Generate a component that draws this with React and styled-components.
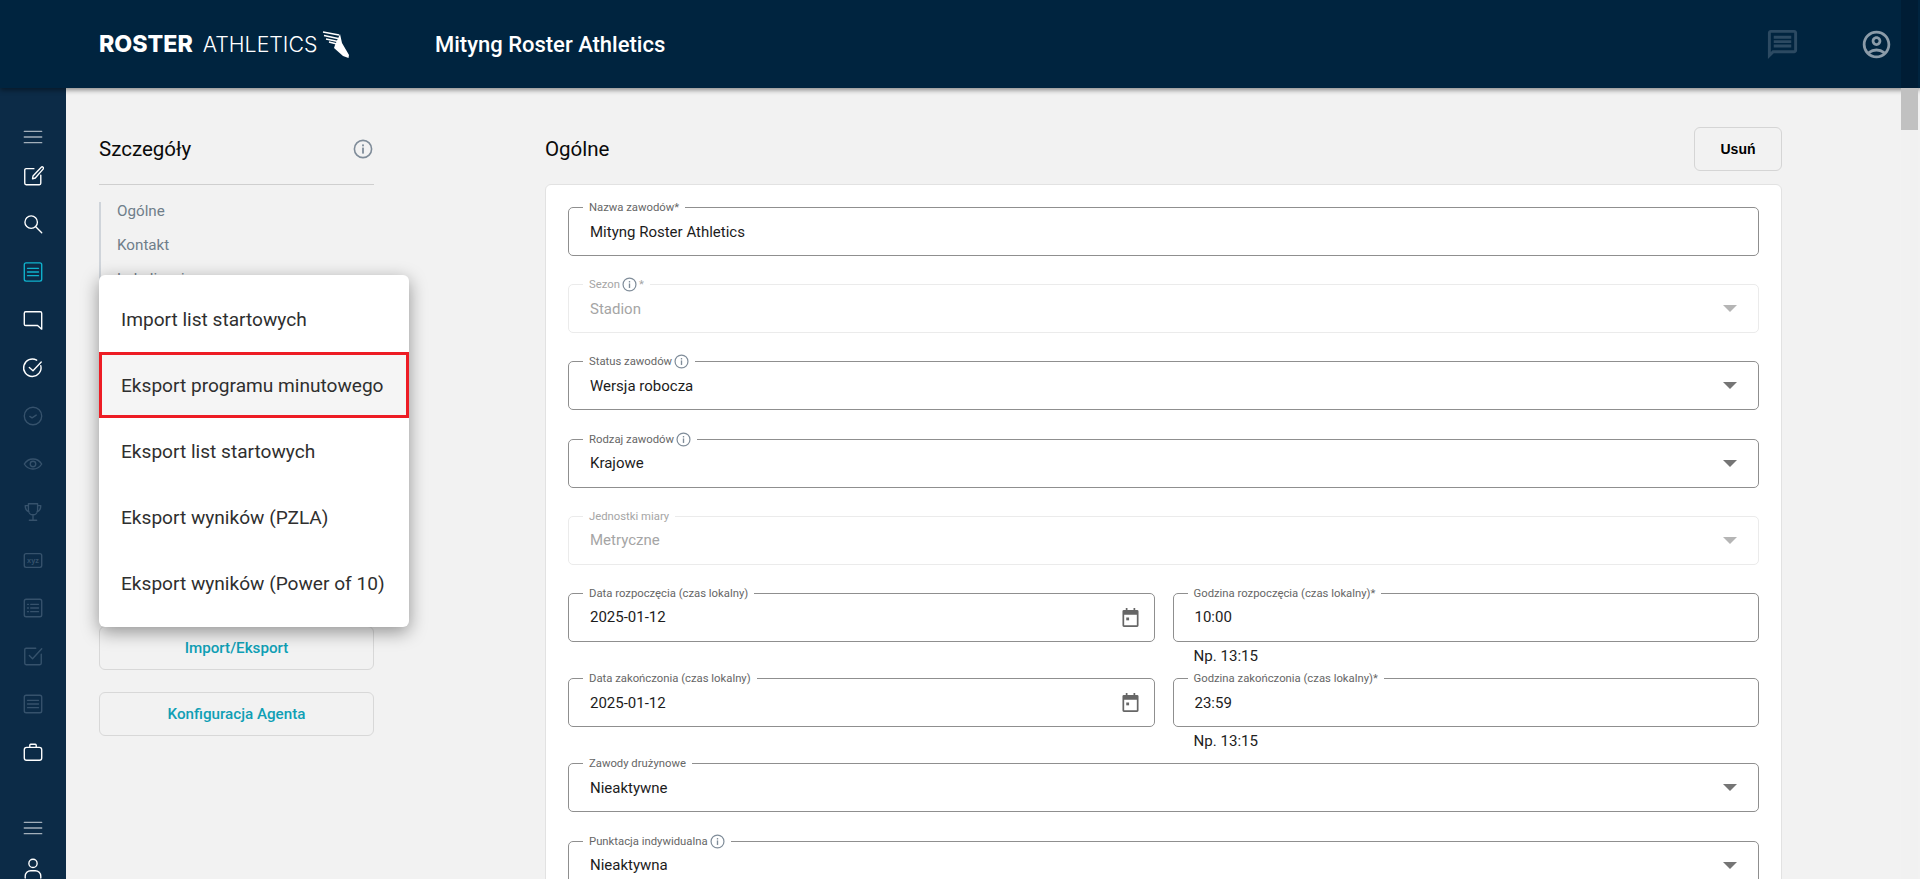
import React from 'react'
import styled, {createGlobalStyle} from 'styled-components'
import {MdOutlineMessage, MdOutlineAccountCircle} from 'react-icons/md'

const GlobalStyle = createGlobalStyle`
  html, body {
    margin: 0;
    height: 100%;
    overflow: hidden;
    background: #f2f2f2;
    font-family: Roboto, "Liberation Sans", sans-serif;
  }
`

const Page = styled.div`
  position: relative;
  height: 100vh;
  display: grid;
  grid-template-rows: 88px 1fr;
  overflow: hidden;
`

const Header = styled.header`
  position: relative;
  z-index: 2;
  display: flex;
  align-items: center;
  padding: 0 27px 0 99px;
  background: #00243f;
  box-shadow: 0 2px 5px rgba(0, 0, 0, 0.45);
`

const Logo = styled.div`
  display: flex;
  align-items: center;
  width: 336px;
  color: #fff;
  font-family: Inter, sans-serif;
  line-height: 27px;
`

const LogoBold = styled.span`
  font-size: 23.2px;
  font-weight: 800;
  margin-right: 10px;
`

const LogoLight = styled.span`
  font-size: 21.3px;
  font-weight: 300;
  margin-right: 5px;
`

const EventName = styled.h1`
  flex: 1;
  margin: 0;
  color: #fff;
  font-size: 22px;
  font-weight: 500;
`

const HeaderIcons = styled.div`
  display: flex;
  align-items: center;
  gap: 60px;
`

const ChatIcon = styled(MdOutlineMessage)`
  color: #2c4a62;
  font-size: 35px;
`

const UserIcon = styled(MdOutlineAccountCircle)`
  color: #8b9ba8;
  font-size: 33px;
`

const Body = styled.div`
  display: flex;
  min-height: 0;
`

const Sidebar = styled.nav`
  flex: 0 0 66px;
  display: flex;
  flex-direction: column;
  align-items: center;
  padding-top: 34px;
  background: #0c2b47;
`

const SideSlot = styled.div`
  flex: 0 0 ${p => p.$height || 48}px;
  display: flex;
  align-items: center;
  justify-content: center;
  color: ${p => (p.$tone === 'active' ? '#0fb2cd' : p.$tone === 'dim' ? '#36526c' : p.$tone === 'soft' ? '#a3afba' : '#fff')};
`

const SideSpacer = styled.div`
  flex: 0 0 32px;
`

const Content = styled.main`
  flex: 1;
  display: flex;
  gap: 171px;
  padding: 39px 0 0 33px;
  min-width: 0;
`

const LeftColumn = styled.aside`
  position: relative;
  flex: 0 0 275px;
`

const TitleRow = styled.div`
  display: flex;
  align-items: center;
  justify-content: space-between;
  height: 44px;
  margin-bottom: 13px;
`

const LeftTitleRow = styled(TitleRow)`
  box-sizing: border-box;
  height: 58px;
  padding: 0 1px 13px 0;
  margin-bottom: 17px;
  border-bottom: 1px solid #cfcfcf;
`

const Title = styled.h2`
  margin: 0;
  font-size: 20.5px;
  font-weight: 400;
  color: #0a0a0a;
`

const InfoBig = styled.svg`
  width: 20px;
  height: 20px;
  color: #7f8c99;
`

const SectionNav = styled.ul`
  margin: 0;
  padding: 0 0 0 16px;
  height: 408px;
  list-style: none;
  border-left: 2px solid #cfd4da;
`

const SectionLink = styled.li`
  height: 18px;
  margin-bottom: 16px;
  font-size: 15.2px;
  line-height: 18px;
  color: #6f7e8a;
`

const OutlineButton = styled.button`
  display: block;
  width: 275px;
  height: 44px;
  margin-top: ${p => p.$top || 0}px;
  border: 1px solid #d8d8d8;
  border-radius: 6px;
  background: transparent;
  color: #0f9fb5;
  font-family: Roboto, sans-serif;
  font-size: 15.2px;
  font-weight: 500;
`

const Menu = styled.ul`
  position: absolute;
  top: 148px;
  left: 0;
  z-index: 3;
  width: 310px;
  height: 352px;
  margin: 0;
  padding: 11px 0;
  box-sizing: border-box;
  list-style: none;
  background: #fff;
  border-radius: 6px;
  box-shadow: 0 5px 18px rgba(0, 0, 0, 0.4);
`

const MenuItem = styled.li`
  display: flex;
  align-items: center;
  box-sizing: border-box;
  height: 66px;
  padding-left: ${p => (p.$selected ? 19 : 22)}px;
  font-size: 19.1px;
  color: #2f2f2f;
  white-space: nowrap;
  ${p => p.$selected && 'background: #f5f5f5; border: 3px solid #ed1c24;'}
`

const RightColumn = styled.section`
  flex: 0 0 1237px;
`

const DeleteButton = styled.button`
  width: 88px;
  height: 44px;
  border: 1px solid #d5d5d5;
  border-radius: 6px;
  background: transparent;
  color: #000;
  font-family: "Liberation Sans", sans-serif;
  font-size: 14px;
  font-weight: 700;
`

const Card = styled.div`
  display: flex;
  flex-direction: column;
  gap: 28.2px;
  height: 800px;
  padding: 22px 22px 0;
  background: #fff;
  border: 1px solid #e2e2e2;
  border-radius: 6px;
`

const FieldBox = styled.div`
  position: relative;
  flex: 0 0 49px;
  display: flex;
  align-items: center;
  justify-content: space-between;
  box-sizing: border-box;
  height: 49px;
  padding: 0 15px 0 21px;
  border: 1px solid ${p => (p.$disabled ? '#ebebeb' : '#8f8f8f')};
  border-radius: 5px;
  color: ${p => (p.$disabled ? '#a5a5a5' : '#1c1c1c')};
  font-size: 15px;
`

const FieldLabel = styled.label`
  position: absolute;
  top: -7px;
  left: 14px;
  display: flex;
  align-items: center;
  gap: 2px;
  height: 13px;
  padding: 0 6px;
  background: #fff;
  font-size: 11.3px;
  color: ${p => (p.$disabled ? '#a5a5a5' : '#666')};
  white-space: nowrap;
`

const InfoSmall = styled.svg`
  width: 15px;
  height: 15px;
  color: #7f8c99;
`

const Arrow = styled.span`
  width: 0;
  height: 0;
  margin-right: 6px;
  border-left: 7px solid transparent;
  border-right: 7px solid transparent;
  border-top: 7px solid ${p => (p.$disabled ? '#b5b5b5' : '#757575')};
`

const CalendarIcon = styled.svg`
  width: 17px;
  height: 19px;
  color: #666;
`

const TimeRow = styled.div`
  flex: 0 0 85.2px;
  display: grid;
  grid-template-columns: 1fr 1fr;
  column-gap: 18px;
  margin-bottom: -28.2px;
`

const Helper = styled.div`
  padding: 4px 0 0 21px;
  font-size: 15.1px;
  line-height: 20px;
  color: #222;
`

const ScrollTrack = styled.div`
  position: absolute;
  top: 0;
  right: 2px;
  z-index: 4;
  width: 17px;
  height: 100%;
  background: linear-gradient(#001d35 0, #001d35 88px, #f1f1f1 88px);
`

const ScrollThumb = styled.div`
  margin-top: 88px;
  height: 42px;
  background: #c1c1c1;
`

const Stroke = ({children, size = 22, width = 1.5}) => (
  <svg width={size} height={size} viewBox="0 0 24 24" fill="none" stroke="currentColor" strokeWidth={width} strokeLinecap="round" strokeLinejoin="round">
    {children}
  </svg>
)

const InfoGlyph = () => (
  <>
    <circle cx="10" cy="10" r="8.6" fill="none" stroke="currentColor" strokeWidth="1.6" />
    <rect x="9.1" y="8.6" width="1.8" height="6" fill="currentColor" />
    <rect x="9.1" y="5.4" width="1.8" height="1.9" fill="currentColor" />
  </>
)

const Lines = () => (
  <Stroke><path d="M2.5 5.8h19M2.5 12h19M2.5 18.2h19" /></Stroke>
)

const sideTop = [
  {tone: 'soft', height: 30, icon: <Lines />},
  {tone: 'white', icon: <Stroke><path d="M13 4H4.5A1.5 1.5 0 0 0 3 5.500V20a1.500 1.500 0 0 0 1.500 1.500H19A1.500 1.500 0 0 0 20.500 20V11" /><path d="M21 2.500l-9 9.500-.5 3 3-.8 8.500-9.700a1.400 1.400 0 0 0-2-2z" /></Stroke>},
  {tone: 'white', icon: <Stroke><circle cx="10" cy="10" r="6.800" /><path d="M15 15l6.500 6.500" /></Stroke>},
  {tone: 'active', icon: <Stroke><rect x="2.500" y="2" width="19" height="20" rx="2" /><path d="M6 8h12M6 12h12M6 16h12" /></Stroke>},
  {tone: 'white', icon: <Stroke><path d="M4 3h16a1.500 1.500 0 0 1 1.500 1.500V22l-4.500-4H4a1.500 1.500 0 0 1-1.500-1.500v-12A1.500 1.500 0 0 1 4 3z" /></Stroke>},
  {tone: 'white', icon: <Stroke><path d="M20.500 9.500A9.500 9.500 0 1 1 16 3.500" /><path d="M8 11.500l4 3.500 9-9.500" /></Stroke>},
  {tone: 'dim', icon: <Stroke><circle cx="12" cy="12" r="9.500" /><path d="M8.500 12.500l2.500 1.500 4.500-3" /></Stroke>},
  {tone: 'dim', icon: <Stroke><path d="M2.500 12C5 8 8.500 6.500 12 6.500S19 8 21.500 12C19 16 15.500 17.500 12 17.500S5 16 2.500 12z" /><circle cx="12" cy="12" r="3" /></Stroke>},
  {tone: 'dim', icon: <Stroke><path d="M7 3h10v7a5 5 0 0 1-10 0zM7 5H3.500c0 4 1.500 6 4 6.500M17 5h3.500c0 4-1.500 6-4 6.500M12 15v5M8 21h8" /></Stroke>},
  {tone: 'dim', icon: <Stroke><rect x="2.500" y="5" width="19" height="15" rx="2" /><text x="12" y="15.500" fontFamily="Liberation Sans, sans-serif" fontSize="8" fontWeight="700" fill="currentColor" stroke="none" textAnchor="middle">xyz</text></Stroke>},
  {tone: 'dim', icon: <Stroke><rect x="2.500" y="2.500" width="19" height="19" rx="2" /><path d="M6 8h1M6 12h1M6 16h1M9.500 8H18M9.500 12H18M9.500 16H18" /></Stroke>},
  {tone: 'dim', icon: <Stroke><path d="M21 10v10a1.500 1.500 0 0 1-1.500 1.500H4.500A1.500 1.500 0 0 1 3 20V5a1.500 1.500 0 0 1 1.500-1.500H15" /><path d="M8 11.500l3.500 3.500 10-11" /></Stroke>},
  {tone: 'dim', icon: <Stroke><rect x="2.500" y="2.500" width="19" height="19" rx="2" /><path d="M6 8h12M6 12h12M6 16h12" /></Stroke>},
  {tone: 'white', icon: <Stroke><rect x="2.500" y="7" width="19" height="14" rx="2.500" /><path d="M8.500 7V4.500A1 1 0 0 1 9.500 3.500h5a1 1 0 0 1 1 1V7" /></Stroke>},
]

const InfoInLabel = () => (
  <InfoSmall viewBox="0 0 20 20"><InfoGlyph /></InfoSmall>
)

const Field = ({label, info, star, value, disabled, select, calendar}) => (
  <FieldBox $disabled={disabled}>
    <FieldLabel $disabled={disabled}>
      {label}
      {info && <InfoInLabel />}
      {star && '*'}
    </FieldLabel>
    <span>{value}</span>
    {select && <Arrow $disabled={disabled} />}
    {calendar && (
      <CalendarIcon viewBox="0 0 18 20">
        <path fill="currentColor" d="M4 0h1.800v2h6.400V0H14v2h2a1.500 1.500 0 0 1 1.500 1.500v15A1.500 1.500 0 0 1 16 20H2a1.500 1.500 0 0 1-1.500-1.500v-15A1.500 1.500 0 0 1 2 2h2zM2.300 7v11.200h13.400V7z" />
        <rect x="4.500" y="10" width="3" height="3" fill="currentColor" />
      </CalendarIcon>
    )}
  </FieldBox>
)

const App = () => (
  <Page>
    <GlobalStyle />
    <Header>
      <Logo>
        <LogoBold>ROSTER</LogoBold>
        <LogoLight>ATHLETICS</LogoLight>
        <svg width="27" height="27" viewBox="0 0 27 27">
          <path fill="#fff" d="M18 3l2 9 7 12-.5 3-5.500-2L12 17l1-3z" />
          <path stroke="#fff" strokeWidth="1.500" fill="none" d="M1 1l16 3M2 4.500l14 3M4 8l12 2.500M7 11l8 2" />
        </svg>
      </Logo>
      <EventName>Mityng Roster Athletics</EventName>
      <HeaderIcons>
        <ChatIcon />
        <UserIcon />
      </HeaderIcons>
    </Header>
    <Body>
      <Sidebar>
        {sideTop.map((item, i) => (
          <SideSlot key={i} $tone={item.tone} $height={item.height}>{item.icon}</SideSlot>
        ))}
        <SideSpacer />
        <SideSlot $tone="soft" $height={40}><Lines /></SideSlot>
        <SideSlot $tone="white" $height={40}>
          <Stroke><circle cx="12" cy="7" r="4.500" /><path d="M3.500 23v-2a6 6 0 0 1 6-6h5a6 6 0 0 1 6 6v2" /></Stroke>
        </SideSlot>
      </Sidebar>
      <Content>
        <LeftColumn>
          <LeftTitleRow>
            <Title>Szczegóły</Title>
            <InfoBig viewBox="0 0 20 20"><InfoGlyph /></InfoBig>
          </LeftTitleRow>
          <SectionNav>
            <SectionLink>Ogólne</SectionLink>
            <SectionLink>Kontakt</SectionLink>
            <SectionLink>Lokalizacja</SectionLink>
          </SectionNav>
          <OutlineButton $top={16}>Import/Eksport</OutlineButton>
          <OutlineButton $top={22}>Konfiguracja Agenta</OutlineButton>
          <Menu>
            <MenuItem>Import list startowych</MenuItem>
            <MenuItem $selected>Eksport programu minutowego</MenuItem>
            <MenuItem>Eksport list startowych</MenuItem>
            <MenuItem>Eksport wyników (PZLA)</MenuItem>
            <MenuItem>Eksport wyników (Power of 10)</MenuItem>
          </Menu>
        </LeftColumn>
        <RightColumn>
          <TitleRow>
            <Title>Ogólne</Title>
            <DeleteButton>Usuń</DeleteButton>
          </TitleRow>
          <Card>
            <Field label="Nazwa zawodów*" value="Mityng Roster Athletics" />
            <Field label="Sezon" info star value="Stadion" disabled select />
            <Field label="Status zawodów" info value="Wersja robocza" select />
            <Field label="Rodzaj zawodów" info value="Krajowe" select />
            <Field label="Jednostki miary" value="Metryczne" disabled select />
            <TimeRow>
              <Field label="Data rozpoczęcia (czas lokalny)" value="2025-01-12" calendar />
              <div>
                <Field label="Godzina rozpoczęcia (czas lokalny)*" value="10:00" />
                <Helper>Np. 13:15</Helper>
              </div>
            </TimeRow>
            <TimeRow>
              <Field label="Data zakończonia (czas lokalny)" value="2025-01-12" calendar />
              <div>
                <Field label="Godzina zakończonia (czas lokalny)*" value="23:59" />
                <Helper>Np. 13:15</Helper>
              </div>
            </TimeRow>
            <Field label="Zawody drużynowe" value="Nieaktywne" select />
            <Field label="Punktacja indywidualna" info value="Nieaktywna" select />
          </Card>
        </RightColumn>
      </Content>
    </Body>
    <ScrollTrack><ScrollThumb /></ScrollTrack>
  </Page>
)

export default App
